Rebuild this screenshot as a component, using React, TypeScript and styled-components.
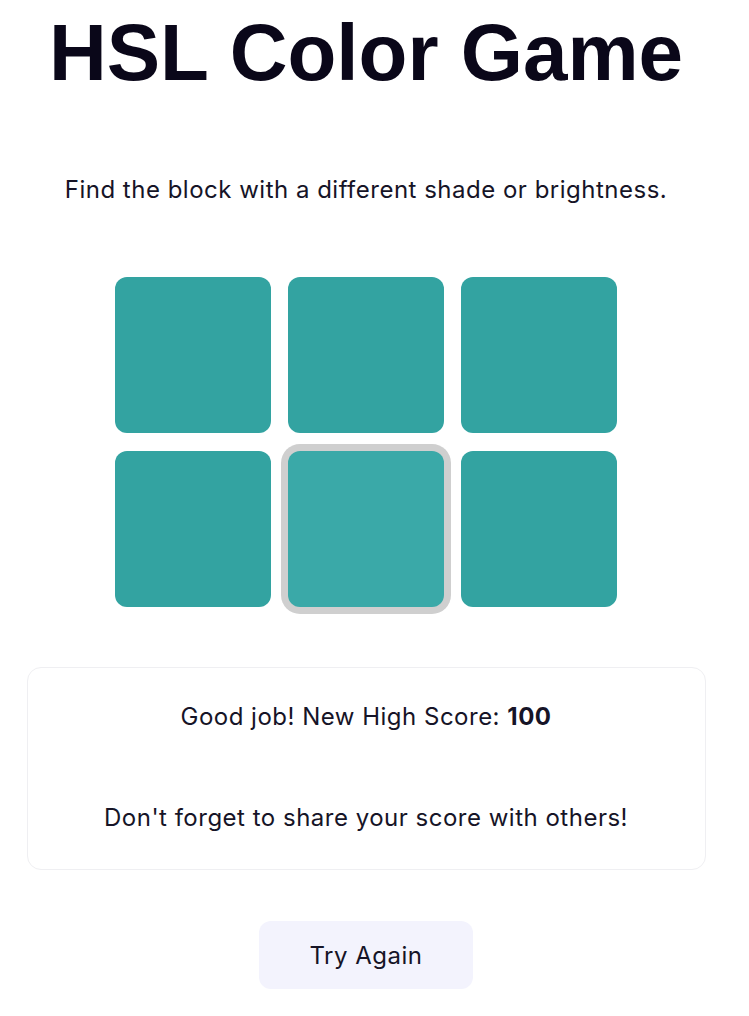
import React from 'react';
import styled, { createGlobalStyle } from 'styled-components';

const GlobalStyle = createGlobalStyle`
  body {
    margin: 0;
    background: #fff;
    font-family: Inter, 'Noto Sans', sans-serif;
    color: #161427;
  }
`;

const Page = styled.main`
  width: 732px;
  padding-top: 8px;
  display: flex;
  flex-direction: column;
  align-items: center;
`;

const Title = styled.h1`
  margin: 0;
  font-family: 'Liberation Sans', Arial, sans-serif;
  font-weight: 700;
  font-size: 80px;
  line-height: 89px;
  color: #0a0719;
`;

const Text = styled.p`
  margin: 0;
  font-size: 24px;
  line-height: 29px;
  letter-spacing: 0.5px;
  text-align: center;
`;

const Hint = styled(Text)`
  margin-top: 78px;
`;

const Grid = styled.div`
  margin-top: 73px;
  display: grid;
  grid-template-columns: repeat(3, 156px);
  column-gap: 17px;
  row-gap: 18px;
`;

const Block = styled.div<{ $odd?: boolean }>`
  width: 156px;
  height: 156px;
  border-radius: 12px;
  background: ${(p) => (p.$odd ? '#3aa9a8' : '#33a3a1')};
  box-shadow: ${(p) => (p.$odd ? '0 0 0 7px #cfcfcf' : 'none')};
  cursor: pointer;
`;

const Card = styled.section`
  margin-top: 60px;
  width: 679px;
  box-sizing: border-box;
  padding: 34px 24px 37px;
  border: 1px solid #efeff2;
  border-radius: 14px;
  display: flex;
  flex-direction: column;
  gap: 72px;
`;

const Score = styled.strong`
  font-weight: 700;
`;

const Button = styled.button`
  margin-top: 51px;
  width: 214px;
  height: 68px;
  border: none;
  border-radius: 12px;
  background: #f3f3fd;
  font-family: Inter, 'Noto Sans', sans-serif;
  font-size: 24px;
  letter-spacing: 0.5px;
  color: #161427;
  cursor: pointer;
`;

const blocks = [false, false, false, false, true, false];

export default function App() {
  return (
    <>
      <GlobalStyle />
      <Page>
        <Title>HSL Color Game</Title>
        <Hint>Find the block with a different shade or brightness.</Hint>
        <Grid>
          {blocks.map((odd, i) => (
            <Block key={i} $odd={odd} />
          ))}
        </Grid>
        <Card>
          <Text>
            Good job! New High Score: <Score>100</Score>
          </Text>
          <Text>Don't forget to share your score with others!</Text>
        </Card>
        <Button>Try Again</Button>
      </Page>
    </>
  );
}
